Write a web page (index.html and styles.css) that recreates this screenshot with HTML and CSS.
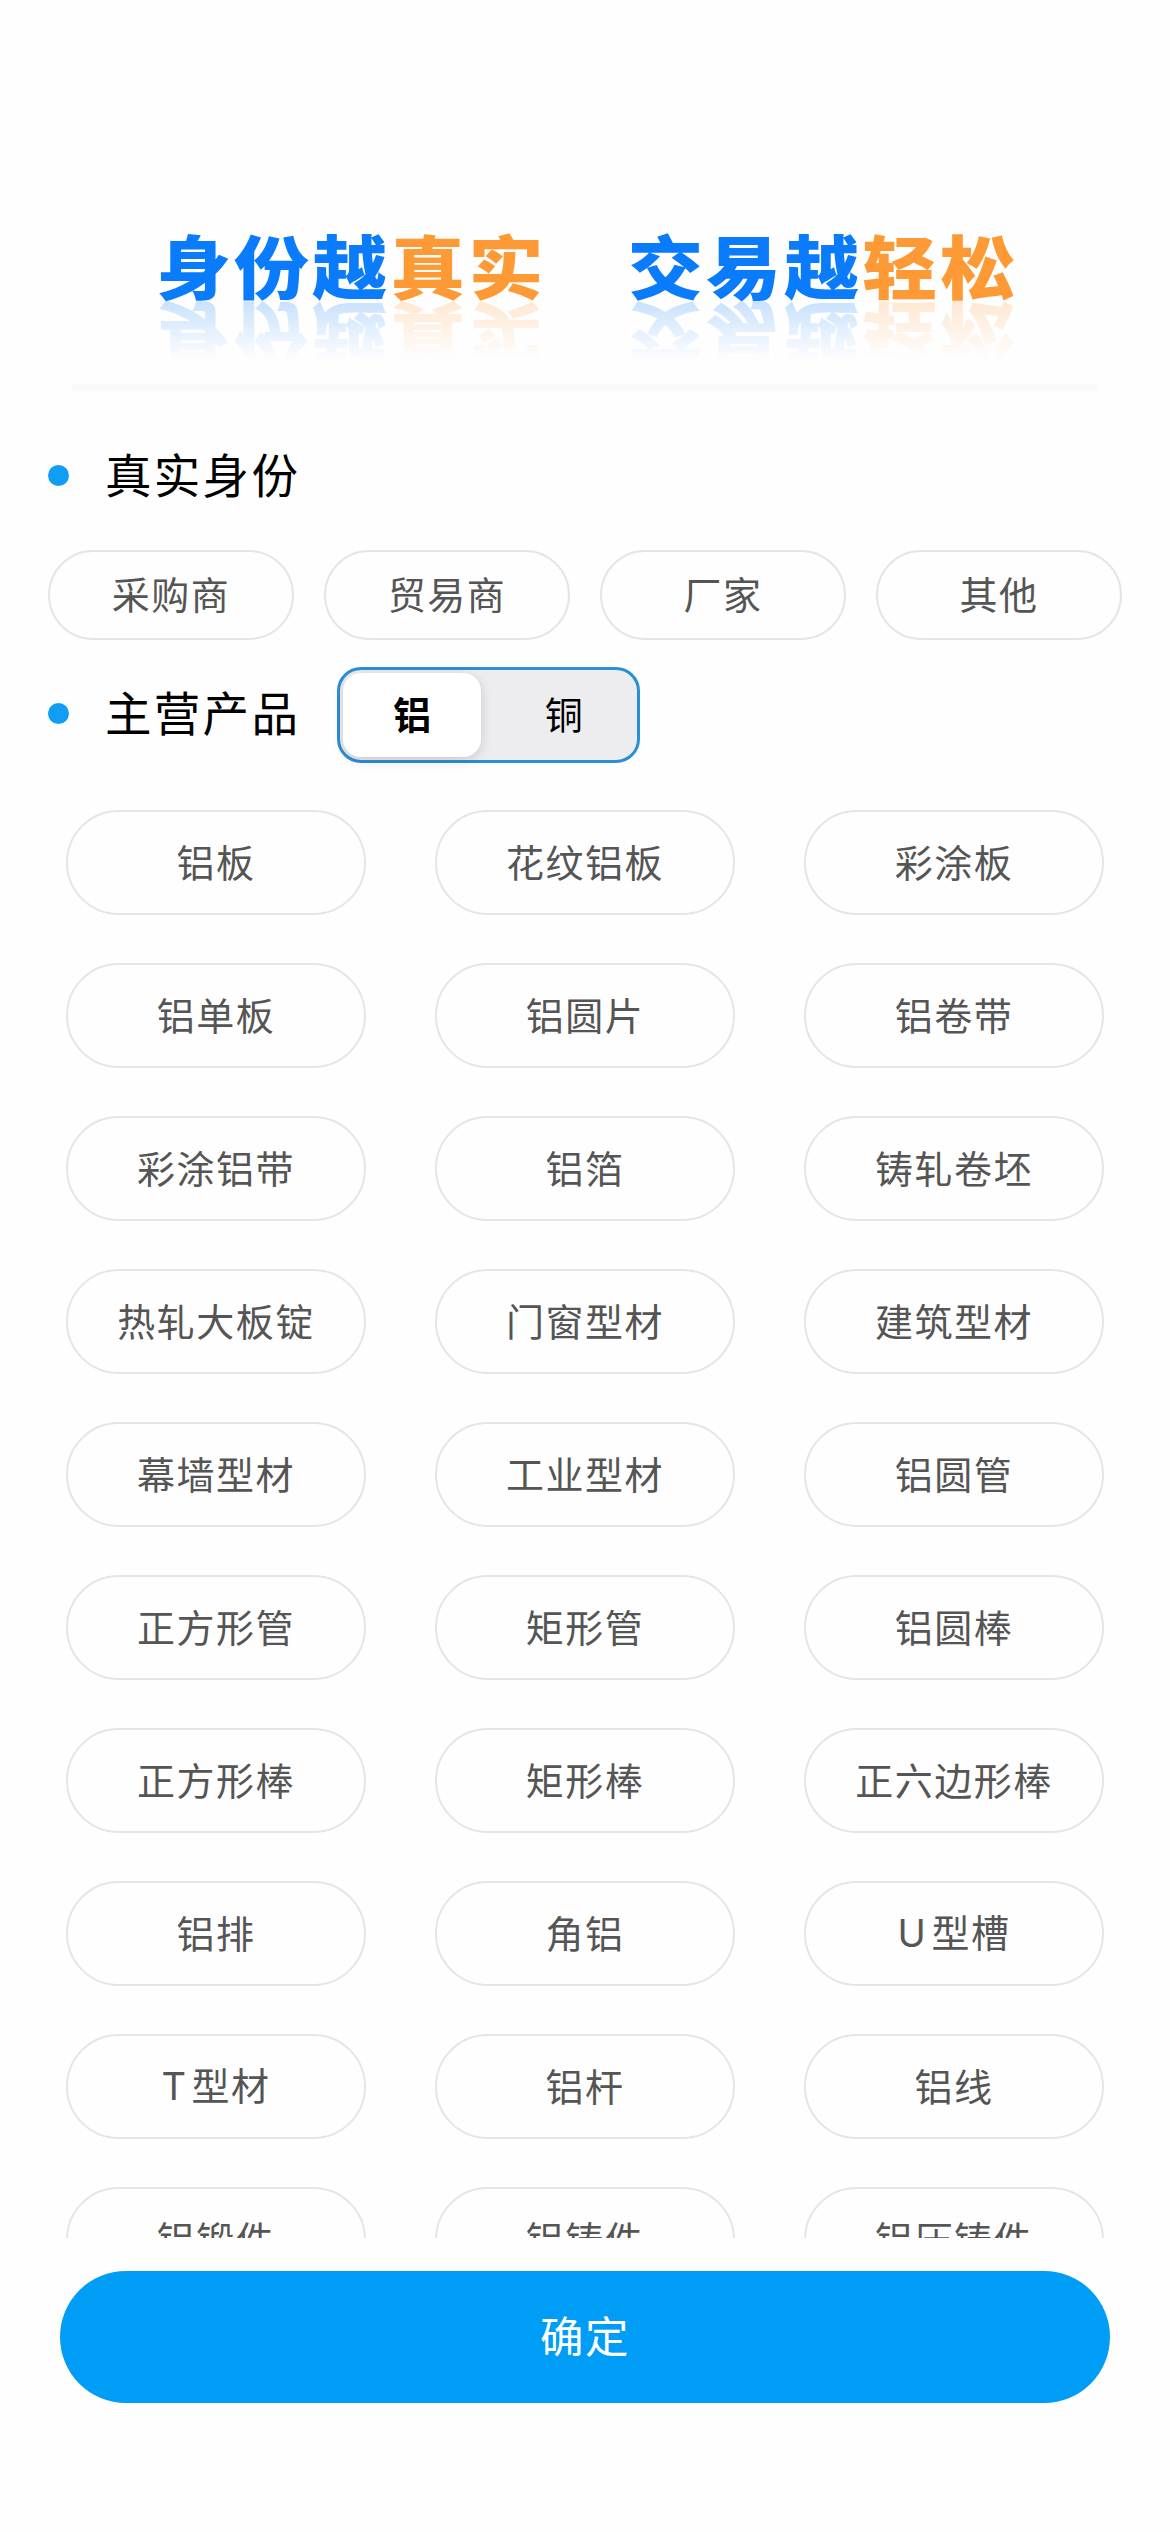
FILE: index.html
```html
<!DOCTYPE html>
<html lang="zh-CN">
<head>
    <meta charset="UTF-8">
    <meta name="viewport" content="width=device-width, initial-scale=1.0">
    <title>身份选择</title>
    <link rel="stylesheet" href="styles.css">
</head>
<body>
<div class="page">
    <header class="banner">
        <h1 class="slogan"><span class="blue">身份越</span><span class="orange">真实</span></h1>
        <h1 class="slogan"><span class="blue">交易越</span><span class="orange">轻松</span></h1>
    </header>

    <div class="section-title">
        <span class="dot"></span>
        <h2>真实身份</h2>
    </div>
    <div class="identity-list">
        <button class="pill">采购商</button>
        <button class="pill">贸易商</button>
        <button class="pill">厂家</button>
        <button class="pill">其他</button>
    </div>

    <div class="section-title product-title">
        <span class="dot"></span>
        <h2>主营产品</h2>
        <div class="segment">
            <button class="tab active">铝</button>
            <button class="tab">铜</button>
        </div>
    </div>
    <div class="product-list">
        <button class="pill">铝板</button>
        <button class="pill">花纹铝板</button>
        <button class="pill">彩涂板</button>
        <button class="pill">铝单板</button>
        <button class="pill">铝圆片</button>
        <button class="pill">铝卷带</button>
        <button class="pill">彩涂铝带</button>
        <button class="pill">铝箔</button>
        <button class="pill">铸轧卷坯</button>
        <button class="pill">热轧大板锭</button>
        <button class="pill">门窗型材</button>
        <button class="pill">建筑型材</button>
        <button class="pill">幕墙型材</button>
        <button class="pill">工业型材</button>
        <button class="pill">铝圆管</button>
        <button class="pill">正方形管</button>
        <button class="pill">矩形管</button>
        <button class="pill">铝圆棒</button>
        <button class="pill">正方形棒</button>
        <button class="pill">矩形棒</button>
        <button class="pill">正六边形棒</button>
        <button class="pill">铝排</button>
        <button class="pill">角铝</button>
        <button class="pill"><span class="latin">U</span>型槽</button>
        <button class="pill"><span class="latin">T</span>型材</button>
        <button class="pill">铝杆</button>
        <button class="pill">铝线</button>
        <button class="pill">铝锻件</button>
        <button class="pill">铝铸件</button>
        <button class="pill">铝压铸件</button>
    </div>

    <footer class="footer">
        <button class="confirm">确定</button>
    </footer>
</div>
</body>
</html>
```
FILE: styles.css
```css
* {
    box-sizing: border-box;
}

body {
    margin: 0;
    background-color: #fefefe;
    color: #000;
    font-family: "Noto Sans CJK SC", sans-serif;
}

h1, h2 {
    margin: 0;
}

button {
    padding: 0;
    border: none;
    background: none;
    font-family: inherit;
    cursor: pointer;
}

.page {
    display: flex;
    flex-direction: column;
    height: 2532px;
    overflow: hidden;
}

/* Slogan banner */
.banner {
    display: flex;
    gap: 112px;
    height: 390px;
    margin: 0 72px;
    padding: 227px 0 0 84px;
    border-bottom: 6px solid #fafafa;
}

.slogan {
    width: 360px;
    height: 74px;
    font-size: 69px;
    font-weight: 900;
    line-height: 74px;
    letter-spacing: 3px;
    white-space: nowrap;
    transform: scaleX(1.085); /* wide lettering */
    transform-origin: left;
    -webkit-box-reflect: below 0 linear-gradient(transparent 20%, rgba(0, 0, 0, 0.22));
}

.blue {
    color: #0a7cfb;
}

.orange {
    color: #fd9a35;
}

/* Section titles */
.section-title {
    display: flex;
    align-items: center;
    height: 96px;
    margin-top: 37px;
    padding-left: 48px;
}

.section-title h2 {
    margin-left: 36px;
    padding-bottom: 5px;
    font-size: 46.5px;
    font-weight: 400;
    line-height: 91px;
    letter-spacing: 2.3px;
}

.product-title {
    margin-top: 27px;
}

.product-title h2 {
    padding-bottom: 8px;
    line-height: 88px;
}

.product-title .dot {
    margin-bottom: 3px;
}

.dot {
    width: 21px;
    height: 21px;
    border-radius: 50%;
    background-color: #109df3;
}

/* Pills */
.pill {
    height: 105px;
    padding-bottom: 4px;
    border: 2px solid #e5e5e5;
    border-radius: 53px;
    color: #555;
    font-size: 38px;
    line-height: 1;
    letter-spacing: 1.5px;
}

.latin {
    margin-right: 4px;
    font-family: Inter, sans-serif;
}

.identity-list {
    display: flex;
    gap: 30px;
    margin-top: 27px;
    padding: 0 48px;
}

.identity-list .pill {
    flex: 1;
    height: 90px;
}

.product-list {
    display: grid;
    grid-template-columns: repeat(3, 300px);
    gap: 48px 69px;
    height: 1428px;
    margin-top: 47px;
    padding-left: 66px;
    overflow: hidden;
}

/* Segmented control */
.segment {
    display: flex;
    width: 303px;
    height: 96px;
    margin-left: 37px;
    padding: 3px;
    border: 3px solid #2b8fd6;
    border-radius: 24px;
    background-color: #ededf0;
}

.tab {
    flex: 1;
    padding: 0 0 4px 5px;
    border-radius: 18px;
    color: #000;
    font-size: 38px;
    line-height: 1;
}

.tab.active {
    flex: 0 0 138px;
    margin-right: 7px;
    padding-left: 0;
    background-color: #fff;
    box-shadow: 0 3px 12px rgba(0, 0, 0, 0.15);
    font-weight: 700;
}

/* Bottom button */
.footer {
    padding: 33px 60px 0;
}

.confirm {
    width: 100%;
    height: 132px;
    padding-bottom: 4px;
    border-radius: 66px;
    background-color: #009df7;
    color: #fff;
    font-size: 43.5px;
    line-height: 1;
    letter-spacing: 1.5px;
}
```
